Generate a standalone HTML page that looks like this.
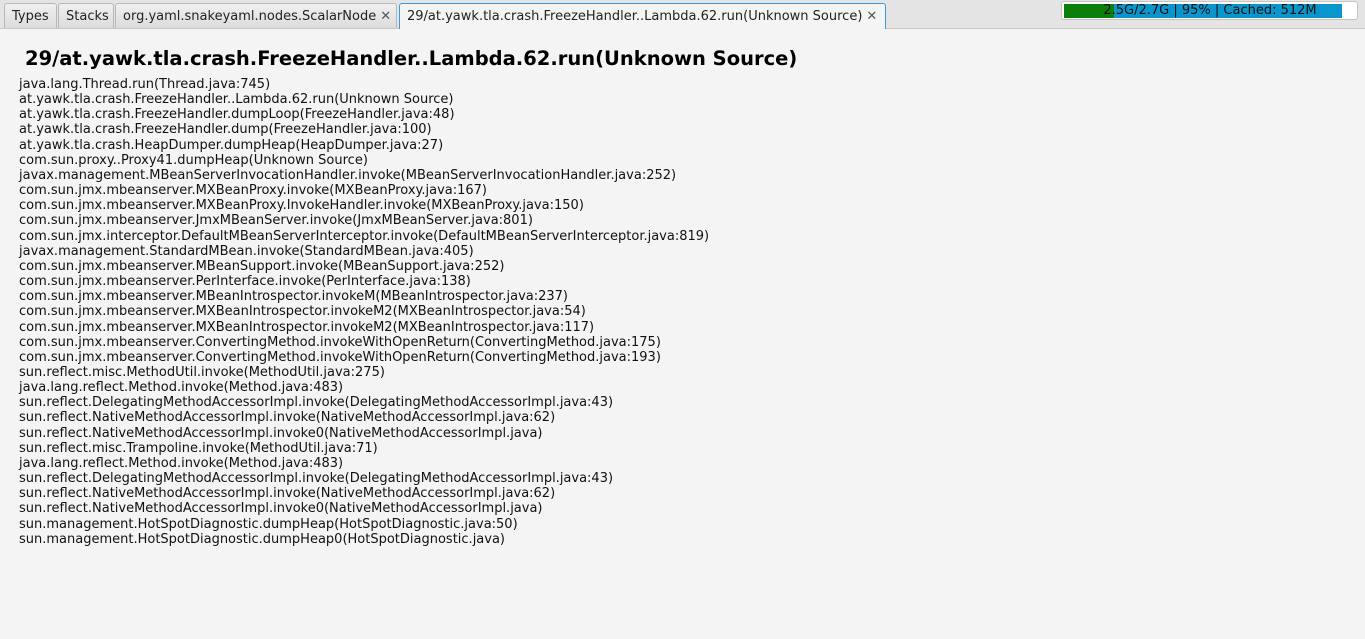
<!DOCTYPE html>
<html><head><meta charset="utf-8"><style>
body{margin:0;width:1365px;height:639px;background:#f4f4f4;font-family:"DejaVu Sans","Liberation Sans",sans-serif;overflow:hidden;position:relative}
.bar{position:absolute;left:0;top:0;width:1365px;height:28px;background:#e4e4e4;border-bottom:1px solid #c8c8c8}
.tab{position:absolute;top:3px;height:25px;box-sizing:border-box;border:1px solid #b8b8b8;border-bottom:none;border-radius:3px 3px 0 0;background:linear-gradient(#f0f0f0,#dcdcdc);font-size:13px;line-height:25px;padding-left:7px;color:#222;white-space:nowrap}
.tab.act{background:#f4f4f4;border-color:#3a9ad9;height:26px}
.x{font-size:13px;color:#555;margin-left:4px}
.mem{position:absolute;left:1061px;top:1px;width:297px;height:19px;box-sizing:border-box;border:1px solid #c4c4c4;border-radius:3px;background:#fff}
.mem .b{position:absolute;left:2px;top:2px;height:14px}
.mem .t{position:absolute;left:8px;width:280px;top:1px;text-align:center;font-size:13px;line-height:16px;color:#111}
h1{position:absolute;left:25px;top:47px;margin:0;font-size:19.5px;font-weight:bold;color:#000;white-space:nowrap}
.lines{position:absolute;left:19px;top:77px;font-size:13px;line-height:15.15px;color:#111;white-space:pre}
</style></head><body>
<div class="bar"></div>
<div class="tab" style="left:4px;width:53px">Types</div>
<div class="tab" style="left:58px;width:56px">Stacks</div>
<div class="tab" style="left:115px;width:282px">org.yaml.snakeyaml.nodes.ScalarNode<span class="x">✕</span></div>
<div class="tab act" style="left:399px;width:487px">29/at.yawk.tla.crash.FreezeHandler..Lambda.62.run(Unknown Source)<span class="x">✕</span></div>
<div class="mem"><div class="b" style="width:50px;background:#0a800a"></div><div class="b" style="left:52px;width:228px;background:#0a96cc"></div><div class="t">2.5G/2.7G | 95% | Cached: 512M</div></div>
<h1>29/at.yawk.tla.crash.FreezeHandler..Lambda.62.run(Unknown Source)</h1>
<div class="lines">java.lang.Thread.run(Thread.java:745)
at.yawk.tla.crash.FreezeHandler..Lambda.62.run(Unknown Source)
at.yawk.tla.crash.FreezeHandler.dumpLoop(FreezeHandler.java:48)
at.yawk.tla.crash.FreezeHandler.dump(FreezeHandler.java:100)
at.yawk.tla.crash.HeapDumper.dumpHeap(HeapDumper.java:27)
com.sun.proxy..Proxy41.dumpHeap(Unknown Source)
javax.management.MBeanServerInvocationHandler.invoke(MBeanServerInvocationHandler.java:252)
com.sun.jmx.mbeanserver.MXBeanProxy.invoke(MXBeanProxy.java:167)
com.sun.jmx.mbeanserver.MXBeanProxy.InvokeHandler.invoke(MXBeanProxy.java:150)
com.sun.jmx.mbeanserver.JmxMBeanServer.invoke(JmxMBeanServer.java:801)
com.sun.jmx.interceptor.DefaultMBeanServerInterceptor.invoke(DefaultMBeanServerInterceptor.java:819)
javax.management.StandardMBean.invoke(StandardMBean.java:405)
com.sun.jmx.mbeanserver.MBeanSupport.invoke(MBeanSupport.java:252)
com.sun.jmx.mbeanserver.PerInterface.invoke(PerInterface.java:138)
com.sun.jmx.mbeanserver.MBeanIntrospector.invokeM(MBeanIntrospector.java:237)
com.sun.jmx.mbeanserver.MXBeanIntrospector.invokeM2(MXBeanIntrospector.java:54)
com.sun.jmx.mbeanserver.MXBeanIntrospector.invokeM2(MXBeanIntrospector.java:117)
com.sun.jmx.mbeanserver.ConvertingMethod.invokeWithOpenReturn(ConvertingMethod.java:175)
com.sun.jmx.mbeanserver.ConvertingMethod.invokeWithOpenReturn(ConvertingMethod.java:193)
sun.reflect.misc.MethodUtil.invoke(MethodUtil.java:275)
java.lang.reflect.Method.invoke(Method.java:483)
sun.reflect.DelegatingMethodAccessorImpl.invoke(DelegatingMethodAccessorImpl.java:43)
sun.reflect.NativeMethodAccessorImpl.invoke(NativeMethodAccessorImpl.java:62)
sun.reflect.NativeMethodAccessorImpl.invoke0(NativeMethodAccessorImpl.java)
sun.reflect.misc.Trampoline.invoke(MethodUtil.java:71)
java.lang.reflect.Method.invoke(Method.java:483)
sun.reflect.DelegatingMethodAccessorImpl.invoke(DelegatingMethodAccessorImpl.java:43)
sun.reflect.NativeMethodAccessorImpl.invoke(NativeMethodAccessorImpl.java:62)
sun.reflect.NativeMethodAccessorImpl.invoke0(NativeMethodAccessorImpl.java)
sun.management.HotSpotDiagnostic.dumpHeap(HotSpotDiagnostic.java:50)
sun.management.HotSpotDiagnostic.dumpHeap0(HotSpotDiagnostic.java)</div>
</body></html>
